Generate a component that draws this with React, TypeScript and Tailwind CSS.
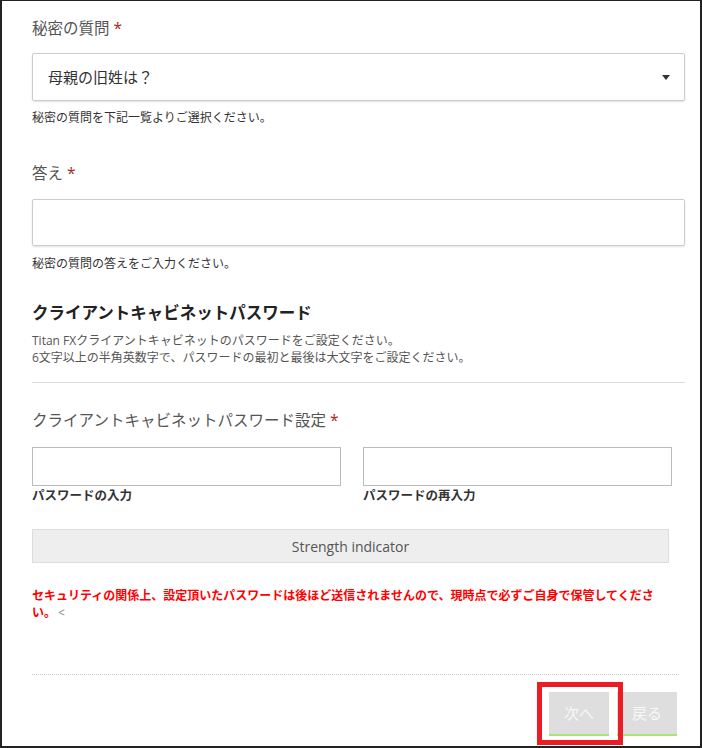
const font = { fontFamily: '"Open Sans", "Noto Sans CJK JP", sans-serif' };

function Label({ text, className = '' }: { text: string; className?: string }) {
  return (
    <div className={`text-[15.5px] leading-[22px] text-[#555] ${className}`}>
      {text} <span className="text-[#a5282b]">*</span>
    </div>
  );
}

export default function App() {
  return (
    <div
      className="relative w-[702px] h-[748px] bg-white border-t border-x-2 border-b-2 border-[#222] pl-[30px] pr-[15px] pt-[16px] box-border"
      style={font}
    >
      {/* Secret question */}
      <Label text="秘密の質問" />
      <div className="mt-[14px] h-[48px] flex items-center justify-between border border-[#ccc] rounded-[2px] shadow-[0_1px_2px_rgba(0,0,0,0.12)] pl-[15px] pr-[14px]">
        <span className="text-[15px] text-[#333]">母親の旧姓は？</span>
        <span className="w-0 h-0 border-l-[4px] border-r-[4px] border-t-[5px] border-l-transparent border-r-transparent border-t-[#333]" />
      </div>
      <div className="mt-[8px] text-[12px] leading-[18px] text-[#333]">秘密の質問を下記一覧よりご選択ください。</div>

      {/* Answer */}
      <Label text="答え" className="mt-[35px]" />
      <div className="mt-[15px] h-[47px] border border-[#ccc] rounded-[2px] shadow-[0_1px_2px_rgba(0,0,0,0.12)]" />
      <div className="mt-[9px] text-[12px] leading-[18px] text-[#333]">秘密の質問の答えをご入力ください。</div>

      {/* Password section */}
      <h2 className="mt-[28px] text-[16.5px] leading-[24px] font-bold text-[#222]">クライアントキャビネットパスワード</h2>
      <div className="mt-[7px] text-[12px] leading-[17px] text-[#555]">
        <div>Titan FXクライアントキャビネットのパスワードをご設定ください。</div>
        <div>6文字以上の半角英数字で、パスワードの最初と最後は大文字をご設定ください。</div>
      </div>
      <div className="mt-[16px] h-px bg-[#ddd]" />

      <Label text="クライアントキャビネットパスワード設定" className="mt-[26px]" />
      <div className="mt-[16px] w-[640px] grid grid-cols-2 gap-x-[22px]">
        <div>
          <div className="h-[39px] border border-[#bbb]" />
          <div className="mt-px text-[12.5px] leading-[18px] font-bold text-[#333]">パスワードの入力</div>
        </div>
        <div>
          <div className="h-[39px] border border-[#bbb]" />
          <div className="mt-px text-[12.5px] leading-[18px] font-bold text-[#333]">パスワードの再入力</div>
        </div>
      </div>

      <div className="mt-[24px] w-[637px] h-[34px] flex items-center justify-center bg-[#eee] border border-[#ddd] text-[14px] text-[#555]">
        Strength indicator
      </div>

      <div className="mt-[24px] w-[637px] text-[12px] leading-[17px] font-bold text-[#f00]">
        セキュリティの関係上、設定頂いたパスワードは後ほど送信されませんので、現時点で必ずご自身で保管してください。
        <span className="inline-block ml-[2px] font-normal text-[#888]">&lt;</span>
      </div>

      <div className="mt-[53px] w-[647px] border-t border-dotted border-[#ccc]" />

      <div className="mt-[17px] flex justify-end gap-[8px] pr-[8px]">
        <button className="w-[60px] h-[44px] bg-[#dedede] border-b-2 border-[#a6e576] text-[15px] text-[#f7f7f7]">次へ</button>
        <button className="w-[60px] h-[44px] bg-[#dedede] border-b-2 border-[#a6e576] text-[15px] text-[#f7f7f7]">戻る</button>
      </div>

      {/* annotation highlight */}
      <div className="absolute left-[535px] top-[681px] w-[86px] h-[63px] border-[5px] border-[#ec1c24]" />
    </div>
  );
}
